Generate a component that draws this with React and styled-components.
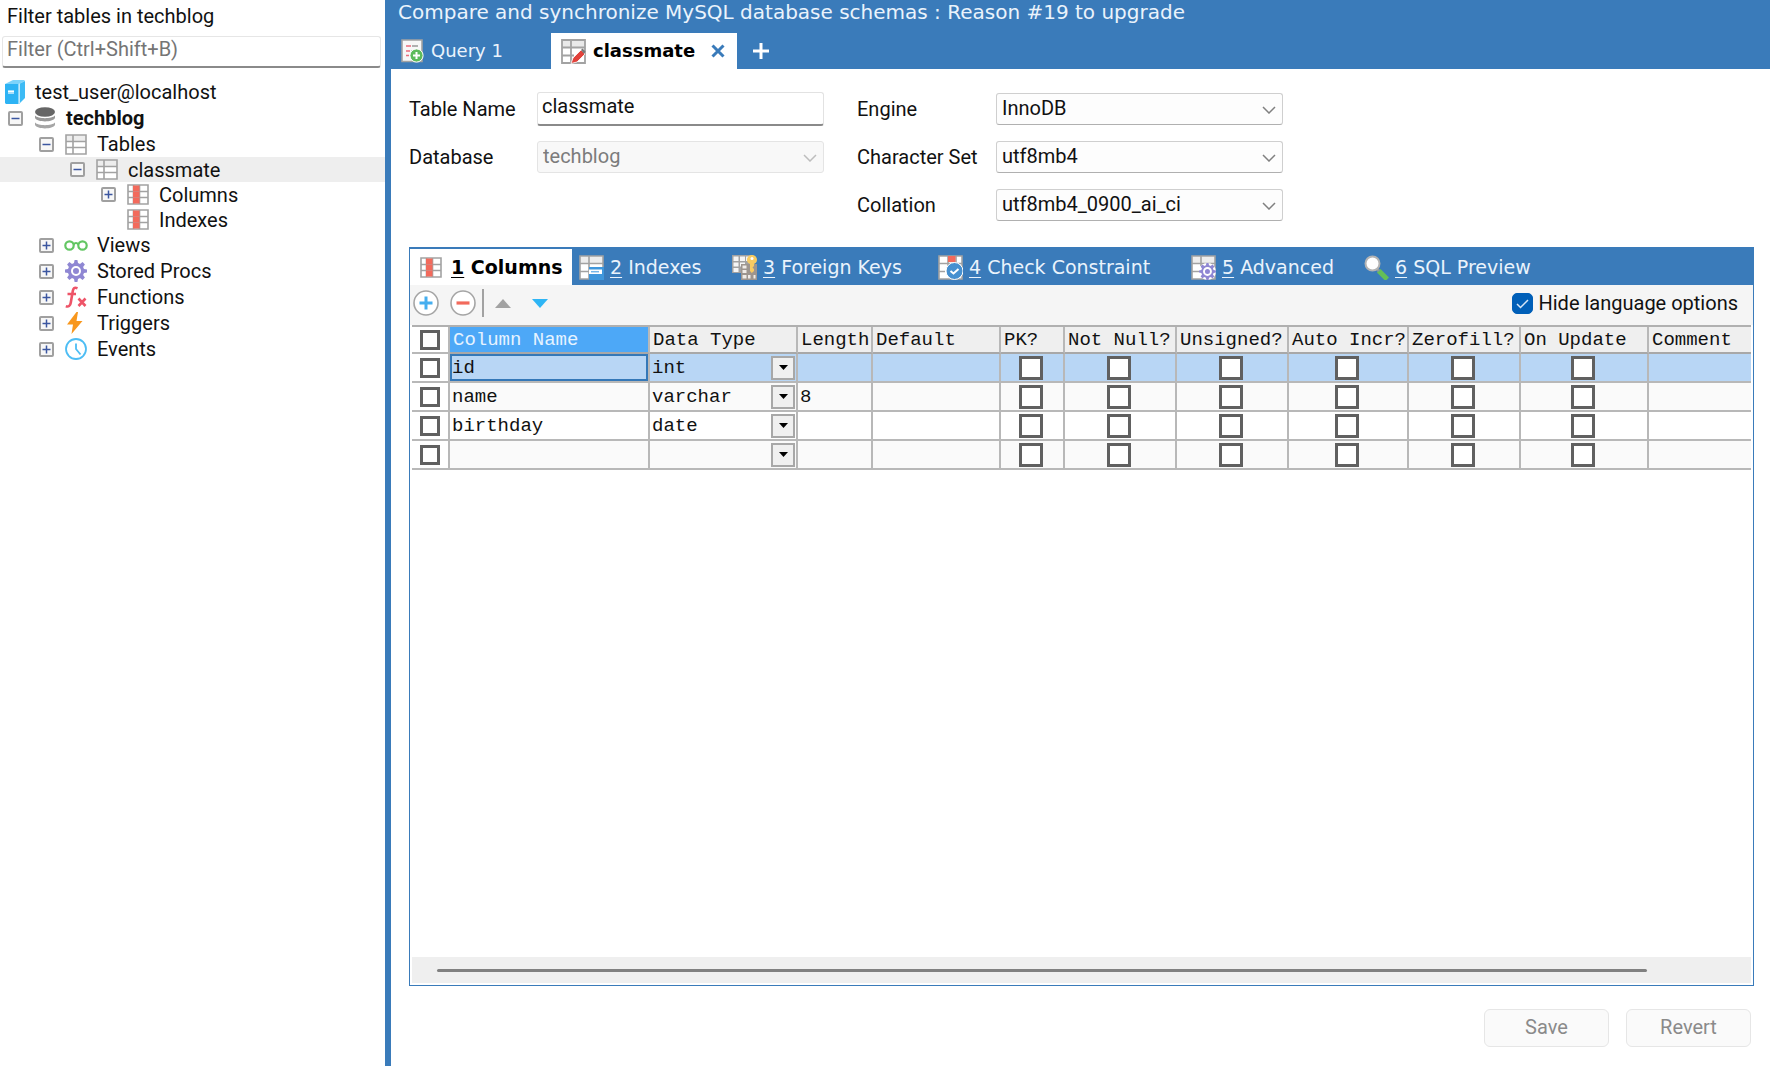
import React, { useState } from 'react'
import { styled, createGlobalStyle } from 'styled-components'

const BLUE = '#3A7BBA'

const treeItems = [
  { label: 'techblog', depth: 0, toggle: 'minus', icon: 'database', bold: true },
  { label: 'Tables', depth: 1, toggle: 'minus', icon: 'table' },
  { label: 'classmate', depth: 2, toggle: 'minus', icon: 'table', selected: true },
  { label: 'Columns', depth: 3, toggle: 'plus', icon: 'columns' },
  { label: 'Indexes', depth: 3, icon: 'columns' },
  { label: 'Views', depth: 1, toggle: 'plus', icon: 'views' },
  { label: 'Stored Procs', depth: 1, toggle: 'plus', icon: 'gear' },
  { label: 'Functions', depth: 1, toggle: 'plus', icon: 'fx' },
  { label: 'Triggers', depth: 1, toggle: 'plus', icon: 'bolt' },
  { label: 'Events', depth: 1, toggle: 'plus', icon: 'clock' },
]

const panelTabs = [
  { number: '1', label: 'Columns', icon: 'columns', width: 162 },
  { number: '2', label: 'Indexes', icon: 'indexes', width: 153 },
  { number: '3', label: 'Foreign Keys', icon: 'foreignKeys', width: 206 },
  { number: '4', label: 'Check Constraint', icon: 'check', width: 253 },
  { number: '5', label: 'Advanced', icon: 'advanced', width: 173 },
  { number: '6', label: 'SQL Preview', icon: 'preview', width: 190 },
]

const gridColumns = [
  { label: 'Column Name', width: 200 },
  { label: 'Data Type', width: 148 },
  { label: 'Length', width: 75 },
  { label: 'Default', width: 128 },
  { label: 'PK?', width: 64, flag: true },
  { label: 'Not Null?', width: 112, flag: true },
  { label: 'Unsigned?', width: 112, flag: true },
  { label: 'Auto Incr?', width: 120, flag: true },
  { label: 'Zerofill?', width: 112, flag: true },
  { label: 'On Update', width: 128, flag: true },
  { label: 'Comment' },
]

const gridRows = [
  { name: 'id', type: 'int', length: '' },
  { name: 'name', type: 'varchar', length: '8' },
  { name: 'birthday', type: 'date', length: '' },
  { name: '', type: '', length: '' },
]

const GEAR = 'M9.6 0h2.8l.6 3 2 .9 2.6-1.8 2.3 2.3L18.1 7l.9 2 3 .6v2.8l-3 .6-.9 2 1.8 2.6-2.3 2.3-2.6-1.8-2 .9-.6 3H9.6L9 19l-2-.9-2.6 1.8-2.3-2.3L3.900 15 3 13l-3-.6V9.600L3 9l.9-2-1.800-2.600 2.300-2.300L7 3.900 9 3z'

function Icon({ name }) {
  switch (name) {
    case 'server':
      return (
        <svg width="20" height="24" viewBox="0 0 20 24">
          <path d="M0 4 8 0h11l1 1-6 3z" fill="#7DD3FA" />
          <path d="M14 4 20 1v17l-6 6z" fill="#3DBBF5" />
          <path d="M13.500 4 14.800 3.500V23l-1.300 1z" fill="#E4F6FF" />
          <path d="M0 4h13.500v20H1l-1-1z" fill="#2DB3F4" />
          <path d="M3 10h6v4H3z" fill="#A8E0FA" />
          <path d="M3 11.500h6" stroke="#fff" />
        </svg>
      )
    case 'database':
      return (
        <svg width="20" height="22" viewBox="0 0 20 22">
          <ellipse cx="10" cy="5" rx="10" ry="4.800" fill="#666" />
          <path d="M0 8.500c3 3.500 17 3.500 20 0v2.500c-2 4.500-18 4.500-20 0z" fill="#999" />
          <path d="M0 15.500c3 3.500 17 3.500 20 0V18c-2 4.500-18 4.500-20 0z" fill="#A6A6A6" />
        </svg>
      )
    case 'table':
      return (
        <svg width="22" height="21" viewBox="0 0 22 21">
          <path d="M1 1h20v19H1z" fill="#fff" />
          <path d="M1 1h20v6H1z" fill="#EDEDED" />
          <path d="M1 1h20v19H1zM8 1v19M1 7.500h20M1 13.500h20" fill="none" stroke="#A2A2A2" strokeWidth="1.600" />
        </svg>
      )
    case 'columns':
      return (
        <svg width="22" height="21" viewBox="0 0 22 21">
          <path d="M1 1h20v19H1z" fill="#fff" />
          <path d="M1 1h20v19H1zM1 7.500h20M1 13.500h20M6.500 1v19M12.500 1v19" fill="none" stroke="#A2A2A2" strokeWidth="1.600" />
          <path d="M6 1.500h6.500v18H6z" fill="#F26A5C" />
          <path d="M6 7.500h6.500M6 13.500h6.500" stroke="#D98078" />
        </svg>
      )
    case 'views':
      return (
        <svg width="24" height="22" viewBox="0 0 24 22" fill="none" stroke="#63C663" strokeWidth="2.200">
          <circle cx="5.500" cy="11.500" r="4.200" />
          <circle cx="18.500" cy="11.500" r="4.200" />
          <path d="M9.500 10.500c1.500-2 3.500-2 5 0" />
        </svg>
      )
    case 'gear':
      return (
        <svg width="22" height="22" viewBox="0 0 22 22">
          <path d={GEAR} fill="#8F87D3" />
          <circle cx="11" cy="11" r="4" fill="#8F87D3" stroke="#fff" strokeWidth="2" />
        </svg>
      )
    case 'fx':
      return (
        <svg width="22" height="22" viewBox="0 0 22 22" fill="none" stroke="#EE5468" strokeWidth="2.600">
          <path d="M12.500 2.200C9 .8 8.200 2.500 7.800 5L5.800 16.500C5.300 20 3.500 21 .8 20.200M2.500 8h8.500" />
          <path d="m13.500 12.500 7 7.500M20.500 12.500l-7 7.500" />
        </svg>
      )
    case 'bolt':
      return (
        <svg width="22" height="22" viewBox="0 0 22 22">
          <path d="M11.500 0 2 12.500h6L6.500 22 17.500 9h-6L13 0z" fill="#F8971D" />
        </svg>
      )
    case 'clock':
      return (
        <svg width="22" height="22" viewBox="0 0 22 22" fill="none" stroke="#4DBDF4" strokeWidth="1.800">
          <circle cx="11" cy="11" r="10" />
          <path d="M11 5.500V11l4.500 5.500" />
        </svg>
      )
    case 'query':
      return (
        <svg width="23" height="24" viewBox="0 0 23 24">
          <path d="M1 1h20v21.500H1z" fill="#F7F7F7" stroke="#A2A2A2" strokeWidth="1.600" />
          <path d="M5 7h5M5 12h4M5 16.500h3" stroke="#EC6A7A" strokeWidth="1.600" />
          <path d="M11 7h6M10.500 12h3" stroke="#999" strokeWidth="1.600" />
          <circle cx="15.500" cy="16.500" r="6.600" fill="#5DBB5B" stroke="#fff" />
          <path d="M15.500 13v7M12 16.500h7" stroke="#fff" strokeWidth="2" />
        </svg>
      )
    case 'edit':
      return (
        <svg width="25" height="25" viewBox="0 0 25 25">
          <path d="M1 1h23v23H1z" fill="#fff" />
          <path d="M1 1h23v7H1z" fill="#E9E9E9" />
          <path d="M1 1h23v23H1zM10 1v23M1 8.500h23M1 16.500h12" fill="none" stroke="#A2A2A2" strokeWidth="1.800" />
          <path d="M10 24.500 12 19l8-8 4 4-8 8z" fill="#E2423B" stroke="#fff" strokeWidth=".8" />
          <path d="m20 11 1.500-1.500 3 3L23 15z" fill="#777" />
        </svg>
      )
    case 'indexes':
      return (
        <svg width="25" height="25" viewBox="0 0 25 25">
          <path d="M1 1h23v23H1z" fill="#fff" />
          <path d="M1 1h23v7H1z" fill="#EDEDED" />
          <path d="M1 1h23v23H1zM10 1v23M1 8.500h23M1 16.500h10" fill="none" stroke="#A2A2A2" strokeWidth="1.600" />
          <path d="M10 12h15v13H10z" fill="#3F97DC" />
          <path d="M10 14.500h13v4.500H10z" fill="#fff" />
          <path d="M12 16.700h8" stroke="#74B6E8" strokeWidth="1.500" />
        </svg>
      )
    case 'foreignKeys':
      return (
        <svg width="25" height="25" viewBox="0 0 25 25">
          <path d="M0 0h21v18H0z" fill="#A2A2A2" />
          <path d="M1.500 1.500h5V6h-5zM8 1.500h5V6H8zM14 1.500h5V6h-5zM1.500 7.500h5v4h-5zM1.500 13h5v4h-5zM8 7.500h5v4H8z" fill="#F5F5F5" />
          <path d="M9 9h16v16H9z" fill="#9D958F" />
          <path d="M10.500 10.500h4v3h-4zM10.500 15h4v3h-4zM10.500 20h4v3.500h-4zM16 20h2.500v3.500H16zM21.500 20h2v3.500h-2z" fill="#F0ECE8" />
          <path d="M20 0c3.200 0 5 2.200 5 4.800 0 2-1.200 3.600-3 4.200v2l-1.500 1.500 1.500 1.500v2L19.800 18 18 16V9c-1.800-.6-3-2.200-3-4.200C15 2.200 16.800 0 20 0z" fill="#F8CB62" />
          <circle cx="20" cy="3.500" r="1.500" fill="#fff" />
        </svg>
      )
    case 'check':
      return (
        <svg width="25" height="25" viewBox="0 0 25 25">
          <path d="M1 1h23v23H1z" fill="#fff" />
          <path d="M1 1h23v23H1zM10 1v10M18 1v7M1 8.500h23M1 16.500h6" fill="none" stroke="#A2A2A2" strokeWidth="1.600" />
          <path d="M10 1h7.500v6H10z" fill="#F26A5C" />
          <circle cx="16.500" cy="16" r="8.500" fill="#4690D0" stroke="#fff" strokeWidth="1" />
          <path d="m12.500 16 3 2.500 5-4.500" fill="none" stroke="#fff" strokeWidth="2" />
        </svg>
      )
    case 'advanced':
      return (
        <svg width="25" height="25" viewBox="0 0 25 25">
          <path d="M1 1h23v23H1z" fill="#fff" />
          <path d="M1 1h23v7H1z" fill="#EDEDED" />
          <path d="M1 1h23v23H1zM10 1v10M1 8.500h23M1 16.500h7" fill="none" stroke="#A2A2A2" strokeWidth="1.600" />
          <circle cx="16.500" cy="16.500" r="8.500" fill="#fff" />
          <g transform="translate(8 8) scale(.77)">
            <path d={GEAR} fill="#8F87D3" />
            <circle cx="11" cy="11" r="4.500" fill="#8F87D3" stroke="#fff" strokeWidth="2.500" />
          </g>
        </svg>
      )
    case 'preview':
      return (
        <svg width="25" height="25" viewBox="0 0 25 25">
          <path d="m16.500 17.500 5 5" stroke="#64BF57" strokeWidth="5" strokeLinecap="square" />
          <path d="m13 14 2 2" stroke="#8E9AA0" strokeWidth="3" />
          <circle cx="8.500" cy="8.500" r="7" fill="#fff" stroke="#B3B3B3" strokeWidth="2" />
        </svg>
      )
    default:
      return null
  }
}

function TreeToggle({ open, label }) {
  return (
    <ToggleButton aria-label={label} aria-expanded={open}>
      <svg width="11" height="11" viewBox="0 0 11 11" stroke="#3B56A0" strokeWidth="1.500">
        <path d={open ? 'M1.500 5.500h8' : 'M1.500 5.500h8M5.500 1.500v8'} />
      </svg>
    </ToggleButton>
  )
}

function Combo({ id, value, disabled }) {
  return (
    <ComboBox>
      <ComboSelect id={id} defaultValue={value} disabled={disabled}>
        <option value={value}>{value}</option>
      </ComboSelect>
      <ComboArrow $disabled={disabled} width="14" height="8" viewBox="0 0 14 8">
        <path d="m1 1 6 6 6-6" fill="none" stroke="currentColor" strokeWidth="1.500" />
      </ComboArrow>
    </ComboBox>
  )
}

function Sidebar() {
  return (
    <SidebarContainer>
      <FilterLabel htmlFor="filter">Filter tables in techblog</FilterLabel>
      <FilterInput id="filter" type="text" placeholder="Filter (Ctrl+Shift+B)" />
      <Tree>
        <ServerRow>
          <Icon name="server" />
          test_user@localhost
        </ServerRow>
        {treeItems.map((item) => (
          <TreeRow key={item.label} $depth={item.depth} $selected={item.selected}>
            {item.toggle
              ? <TreeToggle open={item.toggle === 'minus'} label={`Toggle ${item.label}`} />
              : <ToggleSpace />}
            <TreeIcon><Icon name={item.icon} /></TreeIcon>
            <TreeText $bold={item.bold}>{item.label}</TreeText>
          </TreeRow>
        ))}
      </Tree>
    </SidebarContainer>
  )
}

function ColumnsGrid() {
  return (
    <Grid>
      <colgroup>
        <col width="38" />
        {gridColumns.map((column) => <col key={column.label} width={column.width} />)}
      </colgroup>
      <thead>
        <tr>
          <SelectCell as="th"><RowCheck type="checkbox" aria-label="Select all rows" /></SelectCell>
          {gridColumns.map((column, i) => (
            <HeadCell key={column.label} $active={i === 0}>{column.label}</HeadCell>
          ))}
        </tr>
      </thead>
      <tbody>
        {gridRows.map((row, i) => (
          <GridRow key={i} $selected={i === 0}>
            <SelectCell><RowCheck type="checkbox" aria-label={`Select row ${i + 1}`} /></SelectCell>
            <Cell $focused={i === 0}>{row.name}</Cell>
            <Cell>
              <TypeBox>
                <TypeSelect aria-label={`Data type ${i + 1}`} defaultValue={row.type}>
                  <option value={row.type}>{row.type}</option>
                </TypeSelect>
                <TypeArrow>
                  <svg width="9" height="5" viewBox="0 0 9 5"><path d="M0 0h9L4.500 5z" /></svg>
                </TypeArrow>
              </TypeBox>
            </Cell>
            <Cell>{row.length}</Cell>
            <Cell />
            {gridColumns.filter((column) => column.flag).map((column) => (
              <FlagCell key={column.label}>
                <FlagCheck type="checkbox" aria-label={`${column.label} ${i + 1}`} />
              </FlagCell>
            ))}
            <Cell />
          </GridRow>
        ))}
      </tbody>
    </Grid>
  )
}

export default function App() {
  const [hideLanguage, setHideLanguage] = useState(true)

  return (
    <Page>
      <GlobalStyle />
      <Sidebar />
      <Main>
        <Header>
          <Promo href="#upgrade">Compare and synchronize MySQL database schemas : Reason #19 to upgrade</Promo>
          <DocumentTabs>
            <QueryTab><Icon name="query" />Query 1</QueryTab>
            <ActiveTab>
              <ActiveTabButton><Icon name="edit" />classmate</ActiveTabButton>
              <CloseButton aria-label="Close tab">
                <svg width="14" height="14" viewBox="0 0 14 14"><path d="m1.500 1.500 11 11M12.500 1.500l-11 11" stroke={BLUE} strokeWidth="3" /></svg>
              </CloseButton>
            </ActiveTab>
            <AddTab aria-label="New tab">
              <svg width="18" height="18" viewBox="0 0 18 18"><path d="M9 1v16M1 9h16" stroke="#fff" strokeWidth="3" /></svg>
            </AddTab>
          </DocumentTabs>
        </Header>

        <Body>
          <Form>
            <FormColumn $label={128}>
              <FieldLabel htmlFor="table-name">Table Name</FieldLabel>
              <NameInput id="table-name" type="text" defaultValue="classmate" />
              <FieldLabel htmlFor="database">Database</FieldLabel>
              <Combo id="database" value="techblog" disabled />
            </FormColumn>
            <FormColumn $label={139}>
              <FieldLabel htmlFor="engine">Engine</FieldLabel>
              <Combo id="engine" value="InnoDB" />
              <FieldLabel htmlFor="charset">Character Set</FieldLabel>
              <Combo id="charset" value="utf8mb4" />
              <FieldLabel htmlFor="collation">Collation</FieldLabel>
              <Combo id="collation" value="utf8mb4_0900_ai_ci" />
            </FormColumn>
          </Form>

          <Panel>
            <PanelTabs>
              {panelTabs.map((tab, i) => (
                <PanelTab key={tab.label} $width={tab.width} $active={i === 0}>
                  <Icon name={tab.icon} />
                  <span><u>{tab.number}</u> {tab.label}</span>
                </PanelTab>
              ))}
            </PanelTabs>
            <Toolbar>
              <ToolButton aria-label="Add column">
                <svg width="26" height="26" viewBox="0 0 26 26">
                  <circle cx="13" cy="13" r="12" fill="#fff" stroke="#A5A5A5" strokeWidth="1.600" />
                  <path d="M13 6.500v13M6.500 13h13" stroke="#45AEEF" strokeWidth="3" />
                </svg>
              </ToolButton>
              <ToolButton aria-label="Remove column">
                <svg width="26" height="26" viewBox="0 0 26 26">
                  <circle cx="13" cy="13" r="12" fill="#fff" stroke="#A5A5A5" strokeWidth="1.600" />
                  <path d="M6.500 13h13" stroke="#F26A5C" strokeWidth="3.200" />
                </svg>
              </ToolButton>
              <ToolSeparator />
              <ToolButton aria-label="Move up">
                <svg width="16" height="9" viewBox="0 0 16 9"><path d="M8 0l8 9H0z" fill="#A2A2A2" /></svg>
              </ToolButton>
              <ToolButton aria-label="Move down">
                <svg width="16" height="9" viewBox="0 0 16 9"><path d="M0 0h16L8 9z" fill="#2EB5F5" /></svg>
              </ToolButton>
              <LanguageOption>
                <LanguageBox>
                  <LanguageCheck
                    type="checkbox"
                    checked={hideLanguage}
                    onChange={(e) => setHideLanguage(e.target.checked)}
                  />
                  {hideLanguage && (
                    <CheckMark width="13" height="10" viewBox="0 0 13 10">
                      <path d="m1 5 3.500 3.500L12 1" fill="none" stroke="#D5E6F7" strokeWidth="1.500" />
                    </CheckMark>
                  )}
                </LanguageBox>
                Hide language options
              </LanguageOption>
            </Toolbar>
            <GridArea><ColumnsGrid /></GridArea>
            <ScrollTrack><ScrollThumb /></ScrollTrack>
          </Panel>

          <Actions>
            <ActionButton disabled>Save</ActionButton>
            <ActionButton disabled>Revert</ActionButton>
          </Actions>
        </Body>
      </Main>
    </Page>
  )
}

const GlobalStyle = createGlobalStyle`
  * {
    box-sizing: border-box;
  }
  body {
    margin: 0;
    background: #FFF;
    color: #111;
    font-family: Roboto, sans-serif;
    font-size: 20px;
    line-height: 24px;
  }
  button, input, select {
    margin: 0;
    font: inherit;
    color: inherit;
  }
  svg {
    display: block;
    flex-shrink: 0;
  }
`;

const Page = styled.div`
  display: flex;
  min-height: 100vh;
`;

const SidebarContainer = styled.aside`
  display: flex;
  flex-direction: column;
  flex-shrink: 0;
  width: 385px;
`;

const FilterLabel = styled.label`
  padding: 4px 7px 8px;
`;

const FilterInput = styled.input`
  height: 32px;
  margin: 0 4px 0 2px;
  padding: 0 4px 5px;
  border: 1px solid #E6E6E6;
  border-bottom: 2px solid #8A8A8A;
  border-radius: 3px;
  background: #FFF;
  &::placeholder {
    color: #757575;
    opacity: 1;
  }
`;

const Tree = styled.div`
  display: flex;
  flex-direction: column;
  padding-top: 11px;
`;

const ServerRow = styled.div`
  display: flex;
  align-items: center;
  gap: 10px;
  height: 26px;
  padding-left: 5px;
`;

const TreeRow = styled.div`
  display: flex;
  align-items: center;
  height: ${(p) => (p.$depth > 1 ? 25 : 26)}px;
  padding-left: ${(p) => 8 + p.$depth * 31}px;
  background: ${(p) => (p.$selected ? '#EEEEEE' : 'transparent')};
`;

const ToggleButton = styled.button`
  display: flex;
  align-items: center;
  justify-content: center;
  flex-shrink: 0;
  width: 15px;
  height: 15px;
  padding: 0;
  border: 2px solid #A0A0A0;
  border-radius: 2px;
  background: #F7F7F7;
`;

const ToggleSpace = styled.span`
  width: 15px;
`;

const TreeIcon = styled.span`
  display: flex;
  justify-content: center;
  width: 22px;
  margin: 0 10px 0 11px;
`;

const TreeText = styled.span`
  font-weight: ${(p) => (p.$bold ? 700 : 400)};
`;

const Main = styled.main`
  display: flex;
  flex: 1;
  flex-direction: column;
  min-width: 0;
  border-left: 6px solid ${BLUE};
`;

const Header = styled.header`
  background: ${BLUE};
  color: #EAF3FC;
  font-family: "DejaVu Sans", sans-serif;
`;

const Promo = styled.a`
  display: block;
  padding: 0 7px 9px;
  color: inherit;
  font-size: 20px;
  text-decoration: none;
  white-space: nowrap;
`;

const DocumentTabs = styled.div`
  display: flex;
  height: 36px;
  font-size: 18px;
`;

const QueryTab = styled.button`
  display: flex;
  align-items: center;
  gap: 7px;
  width: 160px;
  padding: 0 10px;
  border: 0;
  background: none;
`;

const ActiveTab = styled.div`
  display: flex;
  align-items: center;
  justify-content: space-between;
  width: 186px;
  padding: 0 12px 0 10px;
  background: #FFF;
  color: #000;
`;

const ActiveTabButton = styled.button`
  display: flex;
  align-items: center;
  gap: 7px;
  padding: 0;
  border: 0;
  background: none;
  font-weight: 700;
`;

const CloseButton = styled.button`
  padding: 0;
  border: 0;
  background: none;
`;

const AddTab = styled.button`
  display: flex;
  align-items: center;
  padding: 0 15px;
  border: 0;
  background: none;
`;

const Body = styled.div`
  display: flex;
  flex: 1;
  flex-direction: column;
  padding: 24px 16px 19px 18px;
`;

const Form = styled.div`
  display: flex;
  align-items: flex-start;
  gap: 33px;
  margin-bottom: 26px;
`;

const FormColumn = styled.div`
  display: grid;
  grid-template-columns: ${(p) => p.$label}px 287px;
  grid-auto-rows: 32px;
  row-gap: 16px;
  align-items: center;
`;

const FieldLabel = styled.label`
  white-space: nowrap;
`;

const NameInput = styled.input`
  width: 100%;
  height: 34px;
  padding: 0 4px 5px;
  border: 1px solid #E2E2E2;
  border-bottom: 2px solid #8A8A8A;
  border-radius: 3px;
  background: #FFF;
`;

const ComboBox = styled.div`
  position: relative;
`;

const ComboSelect = styled.select`
  display: block;
  width: 100%;
  height: 32px;
  padding: 0 5px 2px;
  border: 1px solid #CFCFCF;
  border-bottom-color: #B0B0B0;
  border-radius: 3px;
  background: #FDFDFD;
  appearance: none;
  &:disabled {
    border-color: #E4E4E4;
    background: #F8F8F8;
    color: #7C7C7C;
    opacity: 1;
  }
`;

const ComboArrow = styled.svg`
  position: absolute;
  top: 13px;
  right: 7px;
  color: ${(p) => (p.$disabled ? '#BDBDBD' : '#808080')};
  pointer-events: none;
`;

const Panel = styled.section`
  display: flex;
  flex: 1;
  flex-direction: column;
  border: 1px solid ${BLUE};
`;

const PanelTabs = styled.div`
  display: flex;
  height: 37px;
  padding-top: 1px;
  background: ${BLUE};
  color: #EAF3FC;
  font-family: "DejaVu Sans", sans-serif;
  font-size: 19px;
`;

const PanelTab = styled.button`
  display: flex;
  align-items: center;
  gap: ${(p) => (p.$active ? 9 : 6)}px;
  width: ${(p) => p.$width}px;
  padding: 0 0 0 ${(p) => (p.$active ? 10 : 7)}px;
  border: 0;
  background: ${(p) => (p.$active ? '#FFF' : 'none')};
  color: ${(p) => (p.$active ? '#000' : 'inherit')};
  font-weight: ${(p) => (p.$active ? 700 : 400)};
  white-space: nowrap;
  u {
    text-underline-offset: 3px;
  }
`;

const Toolbar = styled.div`
  display: flex;
  align-items: center;
  gap: 5px;
  height: 40px;
  padding: 0 15px 4px 0;
  background: #F5F5F5;
`;

const ToolButton = styled.button`
  display: flex;
  align-items: center;
  justify-content: center;
  width: 32px;
  height: 32px;
  padding: 0;
  border: 0;
  background: none;
`;

const ToolSeparator = styled.span`
  width: 2px;
  height: 28px;
  margin: 0 -2px;
  background: #A2A2A2;
`;

const LanguageOption = styled.label`
  display: flex;
  align-items: center;
  gap: 5px;
  margin-left: auto;
`;

const LanguageBox = styled.span`
  display: flex;
  position: relative;
`;

const LanguageCheck = styled.input`
  width: 21px;
  height: 21px;
  border: 1px solid #005FB8;
  border-radius: 5px;
  background: #FFF;
  appearance: none;
  &:checked {
    background: #005FB8;
  }
`;

const CheckMark = styled.svg`
  position: absolute;
  top: 6px;
  left: 4px;
  pointer-events: none;
`;

const GridArea = styled.div`
  flex: 1;
  margin: 0 2px;
  font-family: "Liberation Mono", monospace;
  font-size: 19px;
`;

const Grid = styled.table`
  width: 100%;
  table-layout: fixed;
  border-collapse: separate;
  border-spacing: 0;
  border-top: 2px solid #B0B0B0;
`;

const HeadCell = styled.th`
  height: 27px;
  padding: 0 0 0 3px;
  border-right: 2px solid #B8B8B8;
  border-bottom: 2px solid #A8A8A8;
  background: ${(p) => (p.$active ? '#4DA8F7' : '#EFEFEF')};
  color: ${(p) => (p.$active ? '#E6F3FF' : '#111')};
  font-weight: 400;
  text-align: left;
  white-space: nowrap;
  &:last-child {
    border-right: 0;
  }
`;

const Cell = styled.td`
  padding: 0 0 0 2px;
  border-right: 2px solid #B8B8B8;
  border-bottom: 2px solid #B8B8B8;
  box-shadow: ${(p) => (p.$focused ? 'inset 0 0 0 2px #3478B8' : 'none')};
  &:last-child {
    border-right: 0;
  }
`;

const SelectCell = styled(Cell)`
  padding: 0 0 0 8px;
  background: #FFF;
`;

const FlagCell = styled(Cell)`
  padding: 0 2px 0 0;
  text-align: center;
`;

const GridRow = styled.tr`
  background: ${(p) => (p.$selected ? '#B8D6F5' : '#FFF')};
  &:nth-child(even) {
    background: #FAFAFA;
  }
`;

const RowCheck = styled.input`
  display: block;
  width: 20px;
  height: 20px;
  border: 3px solid #606060;
  background: #FFF;
  appearance: none;
`;

const FlagCheck = styled(RowCheck)`
  width: 24px;
  height: 24px;
  margin: 0 auto;
`;

const TypeBox = styled.div`
  display: flex;
  position: relative;
  align-items: center;
  height: 27px;
`;

const TypeSelect = styled.select`
  width: 100%;
  height: 27px;
  padding: 0 28px 0 0;
  border: 0;
  background: none;
  appearance: none;
`;

const TypeArrow = styled.span`
  display: flex;
  position: absolute;
  right: 1px;
  align-items: center;
  justify-content: center;
  width: 24px;
  height: 24px;
  border: 2px solid #A8A8A8;
  background: #F0F0F0;
  pointer-events: none;
`;

const ScrollTrack = styled.div`
  height: 26px;
  margin: 0 2px 2px;
  padding: 12px 104px 0 25px;
  background: #EFEFEF;
`;

const ScrollThumb = styled.div`
  height: 3px;
  border-radius: 2px;
  background: #808080;
`;

const Actions = styled.div`
  display: flex;
  justify-content: flex-end;
  gap: 17px;
  padding: 23px 3px 0 0;
`;

const ActionButton = styled.button`
  width: 125px;
  height: 38px;
  padding: 0 0 2px;
  border: 1px solid #E6E6E6;
  border-radius: 6px;
  background: #FAFAFA;
  &:disabled {
    color: #8A8A8A;
  }
`;
